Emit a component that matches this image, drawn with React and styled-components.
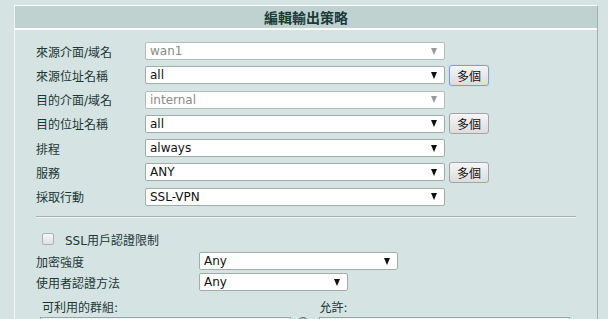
import React from 'react'
import styled, {createGlobalStyle} from 'styled-components'

const GlobalStyle = createGlobalStyle`
  body {
    margin: 0;
    background: #d5e3e2;
    font-family: "DejaVu Sans", "Noto Sans CJK TC", sans-serif;
    overflow: hidden;
  }
`

const rows = [
  {label: '來源介面/域名', value: 'wan1', disabled: true},
  {label: '來源位址名稱', value: 'all', multi: true, focused: true},
  {label: '目的介面/域名', value: 'internal', disabled: true},
  {label: '目的位址名稱', value: 'all', multi: true},
  {label: '排程', value: 'always'},
  {label: '服務', value: 'ANY', multi: true},
  {label: '採取行動', value: 'SSL-VPN'},
]

function Dropdown({value, disabled, width}) {
  return (
    <Select $disabled={disabled} $w={width}>
      <span>{value}</span>
      <Arrow $disabled={disabled} />
    </Select>
  )
}

export default function App() {
  return (
    <Page>
      <GlobalStyle />
      <Panel>
        <Header>編輯輸出策略</Header>
        <Body>
          {rows.map((r, i) => (
            <Row key={i}>
              <Label>{r.label}</Label>
              <Dropdown value={r.value} disabled={r.disabled} width={300} />
              {r.multi && <MultiButton $focused={r.focused}>多個</MultiButton>}
            </Row>
          ))}
          <Divider />
          <CheckRow>
            <Checkbox />
            <CheckText>SSL用戶認證限制</CheckText>
          </CheckRow>
          <SubRow>
            <SubLabel>加密強度</SubLabel>
            <Dropdown value="Any" width={199} />
          </SubRow>
          <SubRow>
            <SubLabel>使用者認證方法</SubLabel>
            <Dropdown value="Any" width={149} />
          </SubRow>
          <GroupLabels>
            <GroupLabel>可利用的群組:</GroupLabel>
            <GroupLabel>允許:</GroupLabel>
          </GroupLabels>
          <ListRow>
            <ListBox />
            <MoveButton />
            <ListBox />
          </ListRow>
        </Body>
      </Panel>
    </Page>
  )
}

const Page = styled.div`
  padding: 5px 10px 0 14px;
  height: 319px;
  box-sizing: border-box;
  overflow: hidden;
`
const Panel = styled.div`
  border-left: 1px solid #edf4f3;
  border-right: 1px solid #a2b1b0;
  border-top: 1px solid #ffffff;
  height: 100%;
`
const Header = styled.div`
  height: 22px;
  line-height: 22px;
  background: #bed2d0;
  border-bottom: 2px solid #fbfdfd;
  text-align: center;
  font-family: "Noto Sans CJK TC", sans-serif;
  font-size: 14px;
  font-weight: bold;
  color: #1b3a3a;
`
const Body = styled.div`
  padding: 9px 0 0 21px;
`
const Row = styled.div`
  display: flex;
  align-items: center;
  height: 24.25px;
`
const Label = styled.div`
  width: 109px;
  font-size: 12px;
  color: #1d3737;
`
const Select = styled.div`
  box-sizing: border-box;
  width: ${p => p.$w}px;
  height: 18px;
  display: flex;
  align-items: center;
  justify-content: space-between;
  padding: 0 7px 0 4px;
  background: #ffffff;
  border: 1px solid ${p => (p.$disabled ? '#b3bcbb' : '#a3abab')};
  border-radius: 2px;
  font-family: "DejaVu Sans", sans-serif;
  font-size: 12px;
  color: ${p => (p.$disabled ? '#8a8a8a' : '#111111')};
`
const Arrow = styled.i`
  width: 0;
  height: 0;
  border-left: 3.5px solid transparent;
  border-right: 3.5px solid transparent;
  border-top: 7px solid ${p => (p.$disabled ? '#9a9a9a' : '#111111')};
`
const MultiButton = styled.div`
  box-sizing: border-box;
  width: 40px;
  height: 21px;
  margin-left: 4px;
  display: flex;
  align-items: center;
  justify-content: center;
  font-family: "Noto Sans CJK TC", sans-serif;
  font-size: 12px;
  color: #111;
  background: linear-gradient(#f6f6f6, #dcdcdc);
  border: 1px solid ${p => (p.$focused ? '#7f9fd0' : '#a4a4a4')};
  border-radius: 3px;
  box-shadow: ${p => (p.$focused ? '0 0 0 1px #cddaf0' : 'none')};
`
const Divider = styled.div`
  width: 540px;
  margin-top: 7px;
  border-top: 1px solid #a3b1b0;
  border-bottom: 1px solid #eef5f4;
`
const CheckRow = styled.div`
  display: flex;
  align-items: center;
  height: 23px;
  margin-top: 10px;
  padding-left: 6px;
`
const Checkbox = styled.div`
  box-sizing: border-box;
  width: 12px;
  height: 12px;
  border: 1px solid #aab3b3;
  border-radius: 2px;
  background: linear-gradient(#f4f6f6, #dde2e2);
`
const CheckText = styled.span`
  margin-left: 11px;
  font-size: 12px;
  color: #1d3737;
`
const SubRow = styled.div`
  display: flex;
  align-items: center;
  height: 21px;
`
const SubLabel = styled.div`
  width: 163px;
  font-size: 12px;
  color: #1d3737;
`
const GroupLabels = styled.div`
  display: flex;
  height: 16px;
  line-height: 16px;
  margin-top: 7px;
  padding-left: 6px;
`
const GroupLabel = styled.div`
  width: 279px;
  font-size: 12px;
  color: #1d3737;
`
const ListRow = styled.div`
  display: flex;
  align-items: flex-start;
  padding-left: 4px;
  margin-top: 1px;
`
const ListBox = styled.div`
  width: 249px;
  height: 80px;
  border: 1px solid #9aa6a5;
  background: #eef3f3;
`
const MoveButton = styled.div`
  width: 10px;
  height: 10px;
  margin: 0 10px 0 6px;
  border: 1px solid #5e6666;
  border-radius: 50%;
  background: #c9d0d0;
`
